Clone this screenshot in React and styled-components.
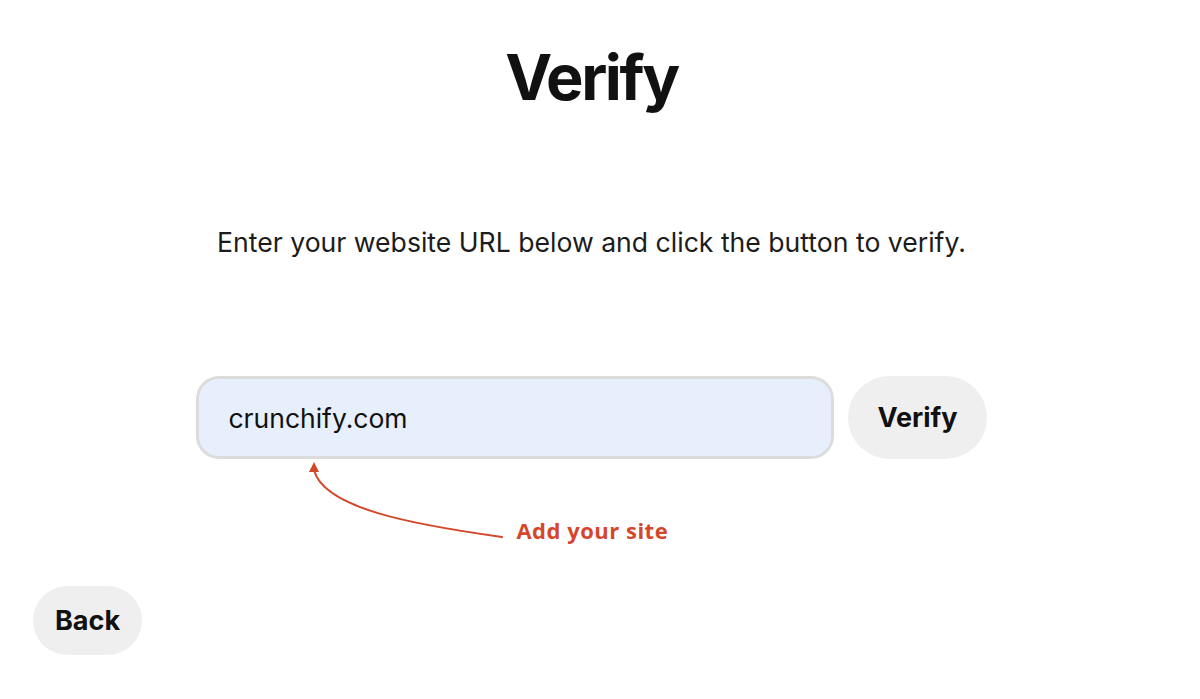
import React from "react";
import styled, { createGlobalStyle } from "styled-components";

const Global = createGlobalStyle`
  html, body { margin: 0; padding: 0; background: #fff; }
  body { font-family: Inter, "Noto Sans", sans-serif; color: #111; }
`;

const Page = styled.div`
  width: 1183px;
  height: 699px;
  display: flex;
  flex-direction: column;
  align-items: center;
  box-sizing: border-box;
  padding-top: 39px;
`;

const Title = styled.h1`
  margin: 0;
  font-size: 63px;
  font-weight: 700;
  line-height: 77px;
  letter-spacing: -2.4px;
  color: #111;
`;

const Subtitle = styled.p`
  margin: 110px 0 0;
  font-size: 26.6px;
  line-height: 32px;
  color: #1c1c1c;
`;

const Row = styled.div`
  margin-top: 118px;
  display: flex;
  align-items: center;
  gap: 14px;
`;

const InputWrap = styled.div`
  position: relative;
`;

const UrlInput = styled.input`
  display: block;
  box-sizing: border-box;
  width: 638px;
  height: 83px;
  border: 3px solid #dcdcdc;
  border-radius: 23px;
  background: #e8effc;
  padding: 0 0 0 29px;
  font-family: Inter, sans-serif;
  font-size: 26.5px;
  color: #111;
  outline: none;
`;

const PillButton = styled.button`
  border: none;
  background: #efefef;
  border-radius: 999px;
  font-family: Inter, sans-serif;
  font-weight: 700;
  font-size: 27px;
  color: #111;
  height: ${(p) => p.$h}px;
  padding: 0 ${(p) => p.$px}px;
  cursor: pointer;
`;

const Annotation = styled.div`
  position: absolute;
  left: 0;
  top: 83px;
  width: 500px;
  height: 90px;
  pointer-events: none;
`;

const Note = styled.span`
  position: absolute;
  left: 320px;
  top: 60px;
  font-family: "Open Sans", sans-serif;
  font-weight: 700;
  font-size: 22px;
  line-height: 22px;
  letter-spacing: 0.5px;
  color: #d5472b;
  white-space: nowrap;
`;

const Footer = styled.div`
  align-self: flex-start;
  margin-top: auto;
  padding: 0 0 44px 33px;
`;

export default function App() {
  return (
    <>
      <Global />
      <Page>
        <Title>Verify</Title>
        <Subtitle>Enter your website URL below and click the button to verify.</Subtitle>
        <Row>
          <InputWrap>
            <UrlInput defaultValue="crunchify.com" />
            <Annotation>
              <svg width="500" height="90" viewBox="0 0 500 90">
                <path
                  d="M 306 78 C 220 66, 128 50, 118 11"
                  fill="none"
                  stroke="#d5472b"
                  strokeWidth="2"
                  strokeLinecap="round"
                />
                <polygon points="118,3 113,13 123,13" fill="#d5472b" />
              </svg>
              <Note>Add your site</Note>
            </Annotation>
          </InputWrap>
          <PillButton $h={83} $px={29}>Verify</PillButton>
        </Row>
        <Footer>
          <PillButton $h={69} $px={22}>Back</PillButton>
        </Footer>
      </Page>
    </>
  );
}
